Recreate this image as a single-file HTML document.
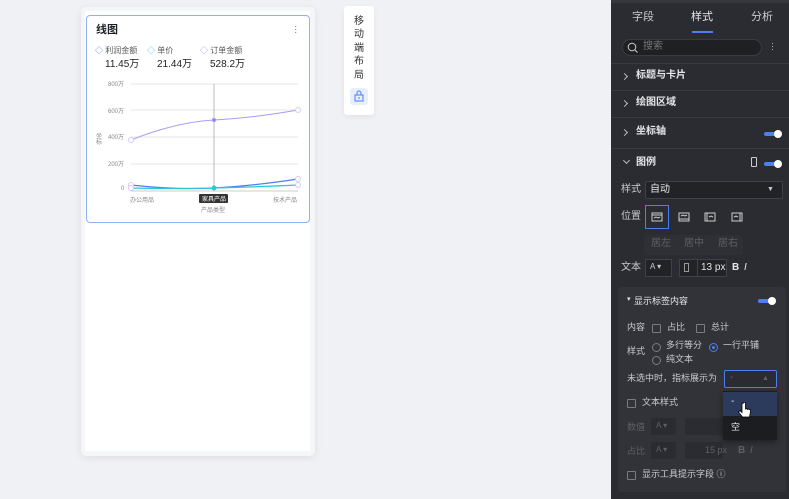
<!DOCTYPE html>
<html><head><meta charset="utf-8"><style>
*{box-sizing:border-box;margin:0;padding:0}
body{width:789px;height:499px;overflow:hidden;background:#f0f1f4;font-family:"Liberation Sans","Noto Sans CJK SC",sans-serif;position:relative;font-size:10px;line-height:1.2}
.abs{position:absolute}
.p{color:#e6e7ea}
.g{color:#c9cace}
.dim{color:#5f6066}
.cb{position:absolute;width:9px;height:9px;border:1px solid #7b7c82;border-radius:1px}
.rd{position:absolute;width:9px;height:9px;border:1px solid #7b7c82;border-radius:50%}
.tg{position:absolute;width:16px;height:4px;background:#4d7ff0;border-radius:2px}
.tg:after{content:"";position:absolute;right:-2px;top:-2px;width:8px;height:8px;background:#fff;border-radius:50%}
.line{position:absolute;left:611px;width:178px;height:1px;background:#3a3b41}
.arr{position:absolute;width:5px;height:5px;border-right:1px solid #bbb;border-bottom:1px solid #bbb}
</style></head><body>
<div class="abs" style="left:81px;top:7px;width:234px;height:449px;background:#f5f6f8;border-radius:5px;box-shadow:0 2px 8px rgba(0,0,0,.08)"></div>
<div class="abs" style="left:85px;top:11px;width:225px;height:440px;background:#fff"></div>
<div class="abs" style="left:86px;top:15px;width:224px;height:208px;border:1px solid #8fb0f3;border-radius:4px;background:#fff"></div>
<div class="abs" style="left:96px;top:24px;font-size:11px;font-weight:bold;color:#1f2329">线图</div>
<div class="abs" style="left:294px;top:25px;color:#777;font-size:10px;line-height:3px">·<br>·<br>·</div>
<div class="abs" style="left:95px;top:46px;font-size:8px;color:#555"><span style="color:#4d7ff0">◇</span> 利润金额</div>
<div class="abs" style="left:147px;top:46px;font-size:8px;color:#555"><span style="color:#2ec7d6">◇</span> 单价</div>
<div class="abs" style="left:200px;top:46px;font-size:8px;color:#555"><span style="color:#9b8af0">◇</span> 订单金额</div>
<div class="abs" style="left:105px;top:59px;font-size:10px;color:#222">11.45万</div>
<div class="abs" style="left:157px;top:59px;font-size:10px;color:#222">21.44万</div>
<div class="abs" style="left:210px;top:59px;font-size:10px;color:#222">528.2万</div>
<svg class="abs" style="left:86px;top:78px" width="224" height="140">
<g font-size="6" fill="#888" font-family="Liberation Sans,Noto Sans CJK SC,sans-serif">
<text x="22" y="8">800万</text><text x="22" y="35">600万</text><text x="22" y="61">400万</text><text x="22" y="88">200万</text><text x="35" y="112">0</text>
<text x="44" y="124">办公用品</text><text x="187" y="124">技术产品</text><text x="115" y="134">产品类型</text>
<text x="10" y="60">坐</text><text x="10" y="66">标</text>
</g>
<g stroke="#e4e5e8" stroke-width="1"><line x1="45" y1="6" x2="212" y2="6"/><line x1="45" y1="32" x2="212" y2="32"/><line x1="45" y1="59" x2="212" y2="59"/><line x1="45" y1="86" x2="212" y2="86"/></g>
<line x1="45" y1="113" x2="212" y2="113" stroke="#ccc"/>
<line x1="128" y1="6" x2="128" y2="113" stroke="#bbb"/>
<path d="M45 62 Q90 44 128 42 T212 32" stroke="#a99af2" fill="none"/>
<path d="M45 107 Q90 112 128 110 T212 101" stroke="#4d7ff0" fill="none" stroke-width="1.2"/>
<path d="M45 110 Q90 111 128 110 T212 107" stroke="#2ec7d6" fill="none" stroke-width="1.2"/>
<g fill="#fff" stroke="#c8cffa"><circle cx="45" cy="62" r="2.5"/><circle cx="212" cy="32" r="2.5"/><circle cx="45" cy="107" r="2.5"/><circle cx="212" cy="101" r="2.5"/><circle cx="45" cy="110" r="2.5"/><circle cx="212" cy="107" r="2.5"/></g>
<circle cx="128" cy="42" r="2" fill="#9b8af0"/><circle cx="128" cy="110" r="2.5" fill="#2ec7d6"/>
<rect x="113" y="116" width="29" height="9" rx="1" fill="#333"/>
<text x="116" y="123" font-size="6" fill="#fff" font-family="Liberation Sans,Noto Sans CJK SC,sans-serif">家具产品</text>
</svg>
<div class="abs" style="left:344px;top:6px;width:30px;height:109px;background:#fff;border-radius:3px;box-shadow:0 2px 6px rgba(0,0,0,.06)"></div>
<div class="abs" style="left:354px;top:15px;font-size:10px;line-height:13.4px;color:#333;width:12px">移<br>动<br>端<br>布<br>局</div>
<div class="abs" style="left:350px;top:88px;width:18px;height:17px;background:#e8eefc;border-radius:3px"></div>
<svg class="abs" style="left:353px;top:90px" width="12" height="13"><rect x="2" y="5" width="8" height="6" fill="none" stroke="#4d7ff0"/><path d="M4 5V3a2 2 0 0 1 4 0v2" fill="none" stroke="#4d7ff0"/><rect x="5.5" y="7" width="1" height="2" fill="#4d7ff0"/></svg>
<div class="abs" style="left:611px;top:0;width:178px;height:499px;background:#2b2c31"></div>
<div class="abs" style="left:611px;top:0;width:178px;height:3px;background:#36373c"></div>
<div class="abs g" style="left:632px;top:11px;font-size:11px">字段</div>
<div class="abs p" style="left:691px;top:11px;font-size:11px">样式</div>
<div class="abs" style="left:692px;top:31px;width:21px;height:2px;background:#4d7ff0"></div>
<div class="abs g" style="left:751px;top:11px;font-size:11px">分析</div>
<div class="abs" style="left:622px;top:39px;width:140px;height:17px;border-radius:9px;background:#1f2024;border:1px solid #3a3b41"></div>
<svg class="abs" style="left:627px;top:42px" width="11" height="11"><circle cx="5" cy="5" r="3.8" fill="none" stroke="#ccc"/><line x1="8" y1="8" x2="10.5" y2="10.5" stroke="#ccc"/></svg>
<div class="abs" style="left:643px;top:41px;font-size:10px;color:#777">搜索</div>
<div class="abs g" style="left:771px;top:42px;font-size:9px;line-height:3px">·<br>·<br>·</div>
<div class="line" style="top:63px"></div>
<div class="arr" style="left:622px;top:74px;transform:rotate(-45deg)"></div><div class="abs p" style="left:636px;top:70px;font-weight:bold">标题与卡片</div>
<div class="line" style="top:90px"></div>
<div class="arr" style="left:622px;top:101px;transform:rotate(-45deg)"></div><div class="abs p" style="left:636px;top:97px;font-weight:bold">绘图区域</div>
<div class="line" style="top:117px"></div>
<div class="arr" style="left:622px;top:130px;transform:rotate(-45deg)"></div><div class="abs p" style="left:636px;top:126px;font-weight:bold">坐标轴</div>
<div class="tg" style="left:764px;top:132px"></div>
<div class="line" style="top:148px"></div>
<div class="arr" style="left:624px;top:158px;transform:rotate(45deg)"></div><div class="abs p" style="left:636px;top:157px;font-weight:bold">图例</div>
<div class="abs" style="left:751px;top:157px;width:6px;height:10px;border:1px solid #ccc;border-radius:1px"></div>
<div class="tg" style="left:764px;top:162px"></div>
<div class="abs g" style="left:621px;top:184px">样式</div>
<div class="abs" style="left:645px;top:181px;width:138px;height:18px;background:#222327;border:1px solid #404148;border-radius:2px"></div>
<div class="abs p" style="left:650px;top:184px">自动</div>
<div class="abs g" style="left:767px;top:186px;font-size:7px">▼</div>
<div class="abs g" style="left:621px;top:211px">位置</div>
<div class="abs" style="left:645px;top:205px;width:24px;height:24px;border:1px solid #4d7ff0"></div>
<svg class="abs" style="left:650px;top:210px" width="100" height="14" stroke="#ccc" fill="none">
<rect x="2" y="3" width="10" height="8"/><path d="M2 5h10M4 8l2-1 2 1 2-1"/>
<rect x="29" y="3" width="10" height="8"/><path d="M29 9h10M31 6l2-1 2 1 2-1"/>
<rect x="55" y="3" width="10" height="8"/><path d="M57 3v8M59 7l2-1 2 1"/>
<rect x="82" y="3" width="10" height="8"/><path d="M90 3v8M84 7l2-1 2 1"/>
</svg>
<div class="abs" style="left:644px;top:235px;width:99px;height:20px;background:#2f3035;border-radius:3px"></div>
<div class="abs dim" style="left:651px;top:238px">居左</div><div class="abs dim" style="left:684px;top:238px">居中</div><div class="abs dim" style="left:718px;top:238px">居右</div>
<div class="abs g" style="left:621px;top:262px">文本</div>
<div class="abs" style="left:645px;top:259px;width:27px;height:18px;background:#222327;border:1px solid #404148"></div>
<div class="abs g" style="left:650px;top:262px;font-size:8px">A ▾</div>
<div class="abs" style="left:679px;top:259px;width:48px;height:18px;background:#222327;border:1px solid #404148"></div>
<div class="abs" style="left:684px;top:263px;width:5px;height:9px;border:1px solid #999"></div>
<div class="abs" style="left:697px;top:259px;width:1px;height:18px;background:#404148"></div>
<div class="abs p" style="left:701px;top:262px">13 px</div>
<div class="abs p" style="left:732px;top:262px;font-weight:bold">B</div><div class="abs p" style="left:744px;top:262px;font-style:italic">I</div>
<div class="abs" style="left:618px;top:287px;width:168px;height:205px;background:#323338;border-radius:3px"></div>
<div class="abs p" style="left:627px;top:296px;font-size:7px">▾</div><div class="abs p" style="left:634px;top:296px;font-size:9px">显示标签内容</div>
<div class="tg" style="left:758px;top:299px"></div>
<div class="abs g" style="left:627px;top:322px;font-size:9px">内容</div>
<div class="cb" style="left:652px;top:324px"></div><div class="abs g" style="left:667px;top:322px;font-size:9px">占比</div>
<div class="cb" style="left:696px;top:324px"></div><div class="abs g" style="left:711px;top:322px;font-size:9px">总计</div>
<div class="abs g" style="left:627px;top:346px;font-size:9px">样式</div>
<div class="rd" style="left:652px;top:343px"></div><div class="abs g" style="left:666px;top:340px;font-size:9px">多行等分</div>
<div class="rd" style="left:709px;top:343px;border-color:#4d7ff0"></div><div class="abs" style="left:712px;top:346px;width:3px;height:3px;border-radius:50%;background:#4d7ff0"></div>
<div class="abs g" style="left:723px;top:340px;font-size:9px">一行平铺</div>
<div class="rd" style="left:652px;top:356px"></div><div class="abs g" style="left:666px;top:354px;font-size:9px">纯文本</div>
<div class="abs g" style="left:627px;top:373px;font-size:9px">未选中时，指标展示为</div>
<div class="abs" style="left:724px;top:370px;width:53px;height:18px;border:1px solid #4d7ff0;border-radius:2px;background:#2b2c31"></div>
<div class="abs dim" style="left:730px;top:372px">-</div><div class="abs dim" style="left:762px;top:375px;font-size:7px">▲</div>
<div class="cb" style="left:627px;top:399px"></div><div class="abs g" style="left:642px;top:397px;font-size:9px">文本样式</div>
<div class="abs dim" style="left:627px;top:422px;font-size:9px">数值</div>
<div class="abs" style="left:651px;top:418px;width:25px;height:17px;background:#2b2c31"></div><div class="abs dim" style="left:656px;top:421px;font-size:8px">A ▾</div>
<div class="abs" style="left:685px;top:418px;width:38px;height:17px;background:#2b2c31"></div>
<div class="abs dim" style="left:627px;top:446px;font-size:9px">占比</div>
<div class="abs" style="left:651px;top:442px;width:25px;height:17px;background:#2b2c31"></div><div class="abs dim" style="left:656px;top:445px;font-size:8px">A ▾</div>
<div class="abs" style="left:685px;top:442px;width:38px;height:17px;background:#2b2c31"></div>
<div class="abs dim" style="left:705px;top:445px;font-size:9px">15 px</div>
<div class="abs dim" style="left:738px;top:445px;font-weight:bold">B</div><div class="abs dim" style="left:750px;top:445px;font-style:italic">I</div>
<div class="cb" style="left:627px;top:471px"></div><div class="abs g" style="left:642px;top:469px;font-size:9px">显示工具提示字段 ⓘ</div>
<div class="abs" style="left:723px;top:391px;width:54px;height:49px;background:#1c1d20;box-shadow:0 2px 6px rgba(0,0,0,.4)"></div>
<div class="abs" style="left:723px;top:392px;width:54px;height:24px;background:#2c3a5c"></div>
<div class="abs p" style="left:731px;top:396px">-</div>
<div class="abs p" style="left:731px;top:422px;font-size:9px">空</div>
<svg class="abs" style="left:738px;top:402px" width="14" height="18"><path d="M4 1.5v9l-2-2-1.5 1.5 4 5h7l1-5V8l-2-1-1 .5-1-1-1 .5V1.5a1 1 0 0 0-2.5 0z" fill="#fff" stroke="#000" stroke-width="0.8"/></svg>
</body></html>
